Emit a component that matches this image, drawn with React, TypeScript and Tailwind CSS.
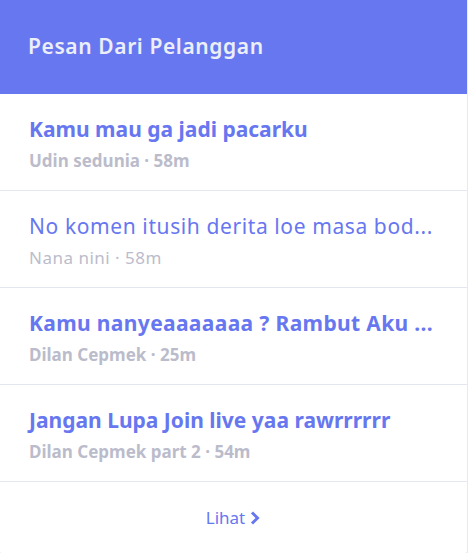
import React from "react";

const items = [
  { title: "Kamu mau ga jadi pacarku", sub: "Udin sedunia · 58m", unread: true, track: "" },
  { title: "No komen itusih derita loe masa bod...", sub: "Nana nini · 58m", unread: false, track: "tracking-[0.6px]" },
  { title: "Kamu nanyeaaaaaaa ? Rambut Aku ...", sub: "Dilan Cepmek · 25m", unread: true, track: "tracking-[0.35px]" },
  { title: "Jangan Lupa Join live yaa rawrrrrrr", sub: "Dilan Cepmek part 2 · 54m", unread: true, track: "" },
];

export default function App() {
  return (
    <div className="w-[469px] h-[553px] bg-white" style={{ fontFamily: '"Noto Sans", sans-serif' }}>
      <div className="w-[468px] bg-white rounded-b-[3px] border-r border-b border-[#e9e9f0]">
        <div className="h-[94px] bg-[#6777ef] flex items-center px-[28px]">
          <h4 className="text-[21px] tracking-[0.6px] font-semibold text-[#eceef8]">Pesan Dari Pelanggan</h4>
        </div>
        {items.map((it, i) => (
          <div key={i} className="h-[97px] border-b border-[#e4e6f0] px-[29px] pt-[4px] flex flex-col justify-center">
            <div className={`text-[21px] leading-[28px] text-[#6777ef] whitespace-nowrap ${it.track} ${it.unread ? "font-bold" : "font-normal"}`}>{it.title}</div>
            <div className={`text-[17px] leading-[24px] mt-[6px] text-[#bbbccb] ${it.unread ? "font-bold" : "font-normal tracking-[0.5px]"}`}>{it.sub}</div>
          </div>
        ))}
        <div className="h-[71px] flex items-center justify-center">
          <span className="text-[17px] text-[#6777ef] flex items-center gap-[4px]">
            Lihat
            <svg width="12" height="16" viewBox="0 0 12 16" fill="none">
              <path d="M3 2.5 L8.5 8 L3 13.5" stroke="#6777ef" strokeWidth="3" />
            </svg>
          </span>
        </div>
      </div>
    </div>
  );
}
